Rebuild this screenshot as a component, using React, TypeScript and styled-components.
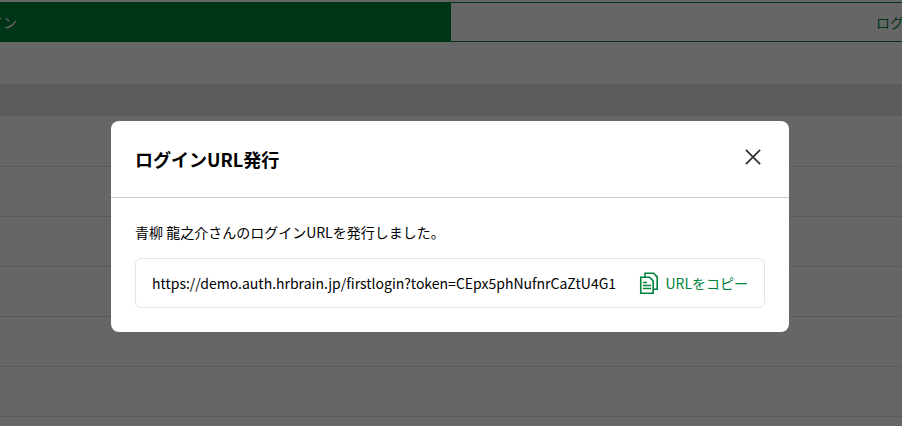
import React from "react";
import styled, { createGlobalStyle } from "styled-components";

const green = "#00833a";

const GlobalStyle = createGlobalStyle`
  *, *::before, *::after { box-sizing: border-box; }
  body {
    margin: 0;
    background: #fff;
    color: #000;
    font-family: "Noto Sans CJK JP", "Noto Sans", sans-serif;
    font-size: 14px;
    line-height: 20px;
  }
  button { font: inherit; }
`;

const Page = styled.main`
  height: 100vh;
  padding-top: 2px;
  overflow: hidden;
`;

const TabList = styled.div`
  display: flex;
  margin: 0 -484px 42px -486px;
`;

const Tab = styled.button<{ $active?: boolean }>`
  flex: 1;
  height: 40px;
  padding: 0;
  border: 1px solid ${green};
  background: ${(p) => (p.$active ? green : "#fff")};
  color: ${(p) => (p.$active ? "#fff" : green)};
`;

const MemberTable = styled.table`
  width: 100%;
  border-collapse: collapse;
`;

const HeadCell = styled.th`
  height: 32px;
  padding: 0;
  background: #e6e6e6;
`;

const Cell = styled.td`
  height: 50px;
  padding: 0;
  border-bottom: 1px solid #e0e0e0;
`;

const Overlay = styled.div`
  position: fixed;
  inset: 0;
  display: flex;
  align-items: flex-start;
  justify-content: center;
  padding: 121px 26px 24px 24px;
  background: rgba(0, 0, 0, 0.6);
`;

const Dialog = styled.section`
  width: 100%;
  max-width: 678px;
  border-radius: 8px;
  background: #fff;
`;

const DialogHeader = styled.header`
  display: flex;
  align-items: flex-start;
  justify-content: space-between;
  padding: 24px;
  border-bottom: 1px solid #ccc;
`;

const Title = styled.h2`
  margin: 0;
  font-size: 18px;
  line-height: 28px;
  font-weight: 700;
`;

const IconButton = styled.button`
  display: flex;
  padding: 0;
  border: 0;
  background: none;
  color: #333;
  cursor: pointer;
`;

const DialogBody = styled.div`
  display: flex;
  flex-direction: column;
  gap: 16px;
  padding: 24px;
`;

const Message = styled.p`
  margin: 0;
`;

const UrlBox = styled.div`
  display: flex;
  align-items: center;
  justify-content: space-between;
  gap: 16px;
  padding: 12px 16px;
  border: 1px solid #e6e6e6;
  border-radius: 6px;
`;

const Url = styled.span`
  min-width: 0;
  overflow-wrap: anywhere;
`;

const CopyButton = styled.button`
  display: flex;
  flex-shrink: 0;
  align-items: center;
  gap: 4px;
  padding: 0;
  border: 0;
  background: none;
  color: ${green};
  cursor: pointer;
`;

const CloseIcon = () => (
  <svg width="24" height="24" viewBox="0 0 24 24" fill="none" stroke="currentColor" strokeWidth="1.8" aria-hidden="true">
    <path d="M4.9 4.9 19.1 19.1M19.1 4.9 4.9 19.1" />
  </svg>
);

const CopyIcon = () => (
  <svg width="24" height="24" viewBox="0 0 24 24" fill="none" stroke="currentColor" strokeWidth="1.6" aria-hidden="true">
    <path d="M3.75 6.25h8.8l3.6 3.6v12.4H3.75z" />
    <path d="M8 6.25V2.25h8.5l3.7 3.7v12.3h-4" />
    <path d="M6 11.5h4M6 14.5h8M6 17.5h8" strokeWidth="1.4" />
  </svg>
);

const rows = [1, 2, 3, 4, 5, 6, 7];

export default function App() {
  return (
    <>
      <GlobalStyle />
      <Page>
        <TabList role="tablist">
          <Tab $active role="tab" aria-selected="true">未ログイン</Tab>
          <Tab role="tab" aria-selected="false">ログイン済み</Tab>
        </TabList>
        <MemberTable>
          <thead>
            <tr><HeadCell /></tr>
          </thead>
          <tbody>
            {rows.map((row) => (
              <tr key={row}><Cell /></tr>
            ))}
          </tbody>
        </MemberTable>
      </Page>
      <Overlay>
        <Dialog role="dialog" aria-modal="true" aria-labelledby="dialog-title">
          <DialogHeader>
            <Title id="dialog-title">ログインURL発行</Title>
            <IconButton type="button" aria-label="閉じる">
              <CloseIcon />
            </IconButton>
          </DialogHeader>
          <DialogBody>
            <Message>青柳 龍之介さんのログインURLを発行しました。</Message>
            <UrlBox>
              <Url>https://demo.auth.hrbrain.jp/firstlogin?token=CEpx5phNufnrCaZtU4G1</Url>
              <CopyButton type="button">
                <CopyIcon />
                URLをコピー
              </CopyButton>
            </UrlBox>
          </DialogBody>
        </Dialog>
      </Overlay>
    </>
  );
}
